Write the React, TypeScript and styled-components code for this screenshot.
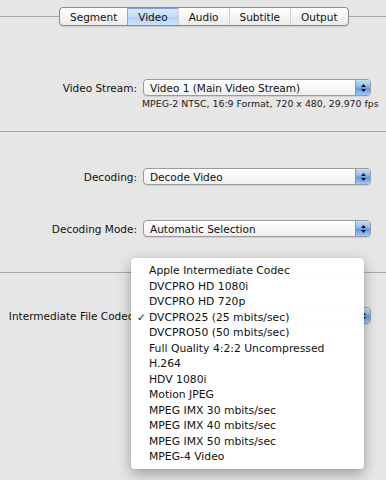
import React from "react";
import styled, { createGlobalStyle, css } from "styled-components";

const Global = createGlobalStyle`
  html, body { margin: 0; padding: 0; background: #e6e6e6; }
  * { box-sizing: border-box; }
`;

const Page = styled.div`
  width: 386px;
  height: 480px;
  overflow: hidden;
  background: #e6e6e6;
  padding-top: 7px;
  font-family: "DejaVu Sans", "Liberation Sans", sans-serif;
  color: #111;
`;

const TabStrip = styled.div`
  display: flex;
  align-items: center;
  height: 19px;
`;

const StripLine = styled.div<{ $grow?: boolean }>`
  height: 1px;
  background: #a9a9a9;
  ${(p) => (p.$grow ? "flex: 1;" : "width: 59px;")}
`;

const Segmented = styled.div`
  display: flex;
  height: 19px;
  border: 1px solid #8c8c8c;
  border-radius: 4px;
  overflow: hidden;
  background: linear-gradient(#ffffff, #f3f3f3 60%, #ebebeb);
  box-shadow: 0 1px 1px rgba(0, 0, 0, 0.12);
`;

const Segment = styled.div<{ $active?: boolean }>`
  display: flex;
  align-items: center;
  justify-content: center;
  padding: 0 10px;
  font-size: 10.5px;
  color: #111;
  border-left: 1px solid #cfcfcf;
  &:first-child {
    border-left: none;
  }
  ${(p) =>
    p.$active &&
    css`
      background: linear-gradient(#dceafb, #c3dcf8 50%, #b0d1f5 51%, #cbe3fb);
      border-left-color: #8aa8d0;
      box-shadow: inset 0 1px 0 #7fa0d0;
    `}
`;

const Row = styled.div<{ $mt: number }>`
  display: grid;
  grid-template-columns: 137px 228px;
  column-gap: 6px;
  align-items: center;
  margin-top: ${(p) => p.$mt}px;
`;

const Label = styled.div`
  justify-self: end;
  white-space: nowrap;
  font-size: 10.5px;
  color: #111;
`;

const PopupWrap = styled.div`
  position: relative;
  height: 17px;
`;

const PopupBox = styled.div`
  display: flex;
  height: 17px;
  border: 1px solid #9b9b9b;
  border-radius: 4px;
  overflow: hidden;
  background: linear-gradient(#ffffff, #f7f7f7 50%, #efefef);
  box-shadow: 0 1px 1px rgba(0, 0, 0, 0.1);
`;

const PopupText = styled.div`
  flex: 1;
  display: flex;
  align-items: center;
  padding-left: 6px;
  font-size: 10.5px;
  white-space: nowrap;
`;

const ArrowButton = styled.div`
  width: 15px;
  display: flex;
  align-items: center;
  justify-content: center;
  border-left: 1px solid #7a9ccc;
  background: linear-gradient(#c9def8, #8fb8ee 45%, #5e98e4 55%, #9ccaf7);
`;

const Info = styled.div`
  grid-column: 2;
  margin-left: -1px;
  font-size: 9.4px;
  white-space: nowrap;
  color: #1a1a1a;
  line-height: 12px;
`;

const Separator = styled.div<{ $mt: number }>`
  margin-top: ${(p) => p.$mt}px;
  height: 1px;
  background: #a8a8a8;
`;

const Menu = styled.div`
  position: absolute;
  left: -12px;
  top: -49px;
  width: 233px;
  padding: 5px 0 4px;
  background: rgba(255, 255, 255, 0.97);
  border-radius: 4px;
  box-shadow: 0 5px 14px rgba(0, 0, 0, 0.32), 0 0 1px rgba(0, 0, 0, 0.3);
  z-index: 10;
`;

const MenuItem = styled.div`
  position: relative;
  height: 15.5px;
  line-height: 15.5px;
  padding-left: 18px;
  font-size: 10.8px;
  color: #111;
  white-space: nowrap;
`;

const Check = styled.span`
  position: absolute;
  left: 6px;
  top: 0;
  font-size: 10.5px;
`;

const Arrows = () => (
  <svg width="7" height="10" viewBox="0 0 7 10">
    <path d="M3.5 1 L6 4 L1 4 Z" fill="#111" />
    <path d="M3.5 9 L6 6 L1 6 Z" fill="#111" />
  </svg>
);

const Popup: React.FC<{ value?: string; children?: React.ReactNode }> = ({ value, children }) => (
  <PopupWrap>
    <PopupBox>
      <PopupText>{value}</PopupText>
      <ArrowButton>
        <Arrows />
      </ArrowButton>
    </PopupBox>
    {children}
  </PopupWrap>
);

const codecs = [
  "Apple Intermediate Codec",
  "DVCPRO HD 1080i",
  "DVCPRO HD 720p",
  "DVCPRO25 (25 mbits/sec)",
  "DVCPRO50 (50 mbits/sec)",
  "Full Quality 4:2:2 Uncompressed",
  "H.264",
  "HDV 1080i",
  "Motion JPEG",
  "MPEG IMX 30 mbits/sec",
  "MPEG IMX 40 mbits/sec",
  "MPEG IMX 50 mbits/sec",
  "MPEG-4 Video",
];

const tabs = ["Segment", "Video", "Audio", "Subtitle", "Output"];
const selectedCodec = "DVCPRO25 (25 mbits/sec)";

export default function App() {
  return (
    <>
      <Global />
      <Page>
        <TabStrip>
          <StripLine />
          <Segmented>
            {tabs.map((t) => (
              <Segment key={t} $active={t === "Video"}>
                {t}
              </Segment>
            ))}
          </Segmented>
          <StripLine $grow />
        </TabStrip>

        <Row $mt={53}>
          <Label>Video Stream:</Label>
          <Popup value="Video 1 (Main Video Stream)" />
        </Row>
        <Row $mt={2}>
          <Info>MPEG-2 NTSC, 16:9 Format, 720 x 480, 29.970 fps</Info>
        </Row>

        <Separator $mt={21} />

        <Row $mt={36}>
          <Label>Decoding:</Label>
          <Popup value="Decode Video" />
        </Row>
        <Row $mt={35}>
          <Label>Decoding Mode:</Label>
          <Popup value="Automatic Selection" />
        </Row>

        <Separator $mt={35} />

        <Row $mt={34}>
          <Label>Intermediate File Codec:</Label>
          <Popup>
            <Menu>
              {codecs.map((c) => (
                <MenuItem key={c}>
                  {c === selectedCodec && <Check>✓</Check>}
                  {c}
                </MenuItem>
              ))}
            </Menu>
          </Popup>
        </Row>
      </Page>
    </>
  );
}
